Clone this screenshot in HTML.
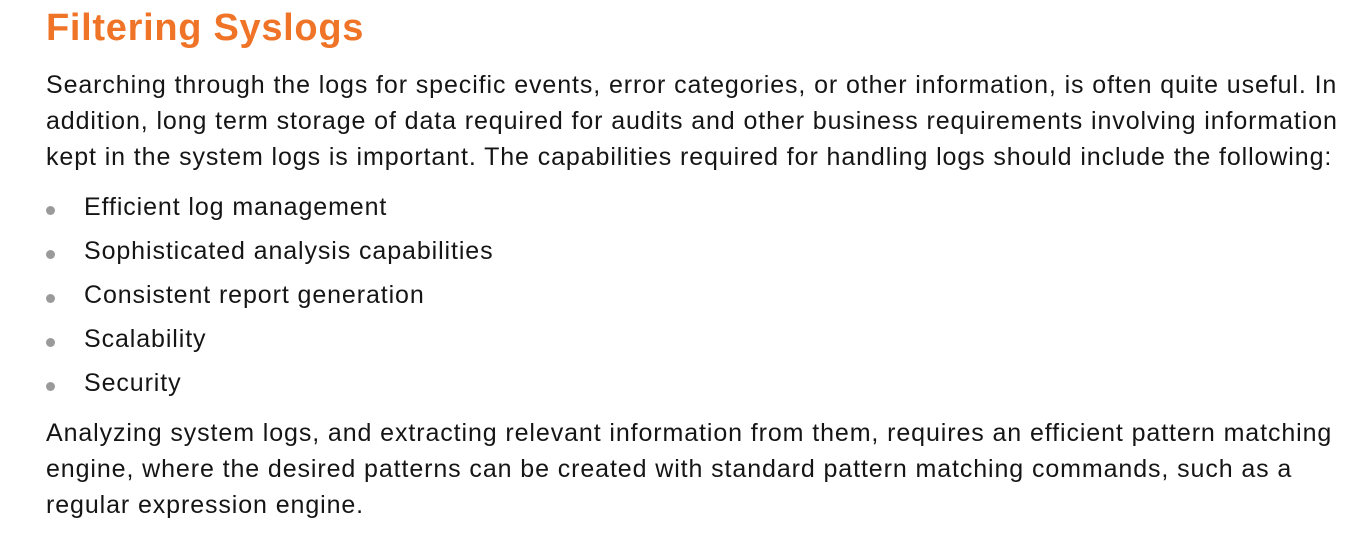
<!DOCTYPE html>
<html><head><meta charset="utf-8"><style>
body{margin:0;background:#fff;width:1367px;height:548px;overflow:hidden;font-family:"Liberation Sans",sans-serif;color:#151515}
.l{position:absolute;left:46px;white-space:nowrap;font-size:25px;line-height:36px;letter-spacing:0.9px}
h1{position:absolute;left:46px;top:4px;margin:0;font-size:38px;line-height:48px;color:#f07427;font-weight:bold;letter-spacing:0.7px}
.d{position:absolute;left:46px;width:9px;height:9px;border-radius:50%;background:#9a9a9a}
</style></head><body>
<h1>Filtering Syslogs</h1>
<div class="l" style="top:67px">Searching through the logs for specific events, error categories, or other information, is often quite useful. In</div>
<div class="l" style="top:103px">addition, long term storage of data required for audits and other business requirements involving information</div>
<div class="l" style="top:139px">kept in the system logs is important. The capabilities required for handling logs should include the following:</div>
<div class="d" style="top:206px"></div><div class="l" style="left:84px;top:189px">Efficient log management</div>
<div class="d" style="top:250px"></div><div class="l" style="left:84px;top:233px">Sophisticated analysis capabilities</div>
<div class="d" style="top:294px"></div><div class="l" style="left:84px;top:277px">Consistent report generation</div>
<div class="d" style="top:338px"></div><div class="l" style="left:84px;top:321px">Scalability</div>
<div class="d" style="top:382px"></div><div class="l" style="left:84px;top:365px">Security</div>
<div class="l" style="top:415px">Analyzing system logs, and extracting relevant information from them, requires an efficient pattern matching</div>
<div class="l" style="top:451px">engine, where the desired patterns can be created with standard pattern matching commands, such as a</div>
<div class="l" style="top:487px">regular expression engine.</div>
</body></html>
